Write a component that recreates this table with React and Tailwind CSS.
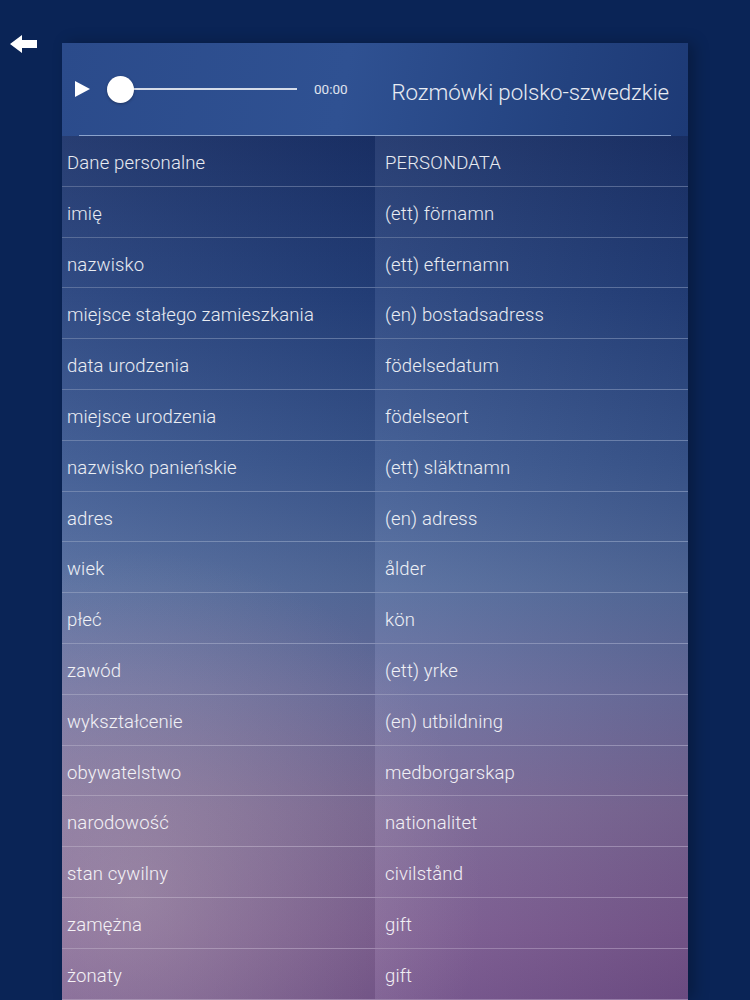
import React from "react";

const rows = [
  ["Dane personalne", "PERSONDATA"],
  ["imię", "(ett) förnamn"],
  ["nazwisko", "(ett) efternamn"],
  ["miejsce stałego zamieszkania", "(en) bostadsadress"],
  ["data urodzenia", "födelsedatum"],
  ["miejsce urodzenia", "födelseort"],
  ["nazwisko panieńskie", "(ett) släktnamn"],
  ["adres", "(en) adress"],
  ["wiek", "ålder"],
  ["płeć", "kön"],
  ["zawód", "(ett) yrke"],
  ["wykształcenie", "(en) utbildning"],
  ["obywatelstwo", "medborgarskap"],
  ["narodowość", "nationalitet"],
  ["stan cywilny", "civilstånd"],
  ["zamężna", "gift"],
  ["żonaty", "gift"],
];

function BackArrow() {
  return (
    <svg width="27" height="18" viewBox="0 0 27 18" className="block">
      <polygon points="0,9 12,0 12,5 27,5 27,13 12,13 12,18" fill="#ffffff" />
    </svg>
  );
}

function Player() {
  return (
    <div className="flex items-center -ml-[4px]">
      <svg width="15" height="16" viewBox="0 0 15 16">
        <polygon points="0,0 15,8 0,16" fill="#ffffff" />
      </svg>
      <div className="relative ml-[17px] w-[190px] h-[27px] flex items-center">
        <div className="ml-[14px] h-[2px] w-[176px] bg-white/80" />
        <div className="absolute left-0 top-0 h-[27px] w-[27px] rounded-full bg-white shadow-[0_1px_3px_rgba(0,0,0,0.3)]" />
      </div>
      <span className="ml-[17px] text-[13.5px] text-white/85">00:00</span>
    </div>
  );
}

export default function App() {
  return (
    <div
      className="min-h-screen h-[1000px] overflow-hidden bg-[#0a2456] flex"
      style={{ fontFamily: "Roboto, 'Liberation Sans', sans-serif" }}
    >
      <div className="w-[62px] shrink-0 pl-[10px] pt-[35px]">
        <BackArrow />
      </div>

      <div className="w-[626px] mt-[43px] shrink-0 shadow-[6px_0_14px_rgba(0,0,0,0.25)]">
        {/* header */}
        <div className="h-[93px] px-[17px] bg-[linear-gradient(100deg,#2b4b8b_0%,#2f5192_45%,#23427f_80%,#1d3a76_100%)] flex flex-col">
          <div className="flex-1 flex items-center justify-between">
            <Player />
            <h1 className="text-[22.3px] font-light text-white/90 tracking-[-0.1px] mr-[2px] mt-[8px]">
              Rozmówki polsko-szwedzkie
            </h1>
          </div>
          <div className="h-px bg-[#8ba3cd]" />
        </div>

        {/* list */}
        <div className="bg-[radial-gradient(ellipse_55%_40%_at_12%_88%,rgba(175,160,175,0.5),transparent),linear-gradient(180deg,#1a3169_0%,#24407c_18%,#3a5790_38%,#536b9d_52%,#6a6e9f_64%,#7b6796_78%,#7a5990_92%,#72508a_100%)]">
          {rows.map(([pl, sv], i) => (
            <div
              key={i}
              className="h-[50.8px] flex border-b border-white/25 text-[18.5px] font-light tracking-[0.15px] text-white/90"
            >
              <div className="w-[313px] flex items-center pl-[5px] pt-[6px] bg-[linear-gradient(90deg,rgba(255,255,255,0.06),rgba(0,0,0,0.06))]">
                {pl}
              </div>
              <div className="flex-1 flex items-center pl-[10px] pt-[6px] bg-[linear-gradient(90deg,rgba(255,255,255,0.07),rgba(0,0,0,0.07))]">
                {sv}
              </div>
            </div>
          ))}
        </div>
      </div>
    </div>
  );
}
